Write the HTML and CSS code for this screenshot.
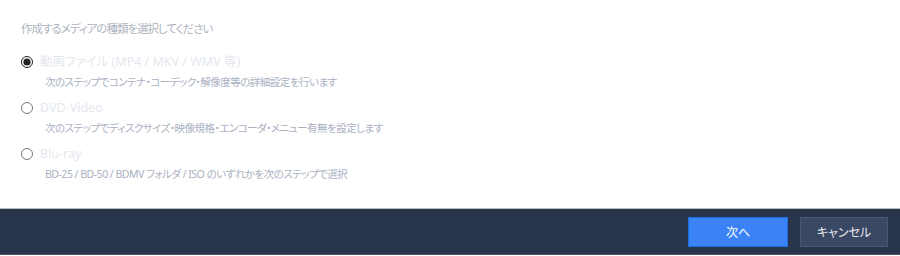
FILE: index.html
```html
<!DOCTYPE html>
<html lang="ja">
<head>
    <meta charset="UTF-8">
    <title>メディアの種類</title>
    <link rel="stylesheet" href="styles.css">
</head>
<body>
    <div class="content">
        <p class="heading">作成するメディアの種類を選択してください</p>
        <div class="option">
            <label class="opt-label"><input type="radio" name="media" checked><span>動画ファイル (MP4 / MKV / WMV 等)</span></label>
            <p class="desc">次のステップでコンテナ・コーデック・解像度等の詳細設定を行います</p>
        </div>
        <div class="option">
            <label class="opt-label"><input type="radio" name="media"><span>DVD-Video</span></label>
            <p class="desc">次のステップでディスクサイズ・映像規格・エンコーダ・メニュー有無を設定します</p>
        </div>
        <div class="option">
            <label class="opt-label"><input type="radio" name="media"><span>Blu-ray</span></label>
            <p class="desc">BD-25 / BD-50 / BDMV フォルダ / ISO のいずれかを次のステップで選択</p>
        </div>
    </div>
    <div class="footer">
        <button type="button" class="btn btn-primary">次へ</button>
        <button type="button" class="btn btn-cancel">キャンセル</button>
    </div>
</body>
</html>
```
FILE: styles.css
```css
body {
    margin: 0;
    font-family: "Noto Sans", "Noto Sans CJK JP", sans-serif;
    font-feature-settings: "palt";
    font-weight: 400;
    background: #fff;
    width: 900px;
    height: 256px;
    overflow: hidden;
}
.content {
    height: 208px;
    padding: 20px 21px 0;
    box-sizing: border-box;
}
.heading {
    margin: 0 0 14px;
    font-size: 11.5px;
    letter-spacing: -1px;
    line-height: 18px;
    color: #aeb4c0;
}
.option {
    margin-bottom: 7px;
}
.opt-label {
    display: flex;
    align-items: center;
    font-size: 12.5px;
    line-height: 20px;
    color: #e4e8ee;
}
.opt-label input {
    width: 12px;
    height: 12px;
    margin: 0 7px 0 0;
    accent-color: #222;
}
.desc {
    margin: 1px 0 0 24px;
    font-size: 10.5px;
    letter-spacing: -0.5px;
    line-height: 18px;
    color: #a9b1c2;
}
.footer {
    height: 45px;
    background: #283449;
    border-top: 1px solid #b8bcc4;
    border-bottom: 1px solid #4c5668;
    display: flex;
    justify-content: flex-end;
    align-items: center;
    gap: 12px;
    padding-right: 12px;
}
.btn {
    height: 30px;
    font-family: inherit;
    font-feature-settings: "palt";
    font-size: 12px;
    color: #fff;
    cursor: pointer;
}
.btn-primary {
    width: 100px;
    background: #3b82f6;
    border: 1px solid #1670e0;
}
.btn-cancel {
    width: 88px;
    background: #3b4863;
    border: 1px solid #4b5672;
    color: #e6e9ef;
}
```
